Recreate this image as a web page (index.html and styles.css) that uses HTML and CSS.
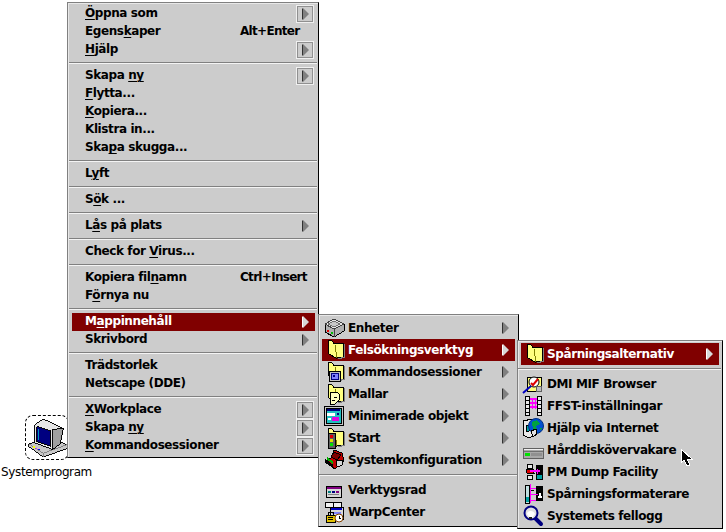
FILE: index.html
```html
<!DOCTYPE html>
<html lang="sv">
<head>
<meta charset="utf-8">
<title>Systemprogram</title>
<link rel="stylesheet" href="styles.css">
</head>
<body>
<svg class="defs" aria-hidden="true" shape-rendering="crispEdges">
  <defs>
    <symbol id="folder" viewBox="0 0 22 22">
      <path d="M5 2 L8 1 L10 3 L11 5 L20 4 L21 18 L14 19 L13 19 L6 15 Z" fill="#ffff80" stroke="#000" stroke-width="1"/>
      <path d="M12 6 L14 19" fill="none" stroke="#808000"/>
      <path d="M21 5 L22 18 L15 20" fill="none" stroke="#808080"/>
    </symbol>
  </defs>
</svg>

<main class="desktop">
  <section class="deskicon">
    <div class="deskicon-frame">
      <svg width="44" height="44" viewBox="0 0 44 44" shape-rendering="crispEdges">
        <path d="M3 28 L3 31 L18 42 L43 33 L43 29 L30 24 L18 24 Z" fill="#c8c8c8" stroke="#000"/>
        <path d="M3 28 L18 38 L43 29" fill="none" stroke="#808080"/>
        <path d="M18 38 V42" stroke="#808080"/>
        <path d="M9 8 L18 2 L39 12 L36 28 L28 34 L9 27 Z" fill="#e6e6e6" stroke="#000"/>
        <path d="M28 13 L39 12 L36 28 L28 34 Z" fill="#a0a0a0" stroke="#000"/>
        <path d="M11 10 L26 15 L26 31 L11 26 Z" fill="#000080" stroke="#000"/>
        <path d="M13 13 V24" stroke="#00a0c0"/>
        <rect x="7" y="30" width="2" height="2" fill="#ff0"/>
        <rect x="10" y="32" width="2" height="2" fill="#f0f"/>
        <rect x="13" y="34" width="2" height="1" fill="#00f"/>
      </svg>
    </div>
    <span class="deskicon-label">Systemprogram</span>
  </section>

  <nav class="menu menu-main">
    <ul class="group">
      <li class="row"><span class="label"><u>Ö</u>ppna som</span><span class="btn"><i class="tri"></i></span></li>
      <li class="row"><span class="label">Egens<u>k</u>aper</span><span class="accel">Alt+Enter</span></li>
      <li class="row"><span class="label"><u>H</u>jälp</span><span class="btn"><i class="tri"></i></span></li>
    </ul>
    <hr>
    <ul class="group">
      <li class="row"><span class="label">Skapa <u>ny</u></span><span class="btn"><i class="tri"></i></span></li>
      <li class="row"><span class="label"><u>F</u>lytta...</span></li>
      <li class="row"><span class="label"><u>K</u>opiera...</span></li>
      <li class="row"><span class="label">Klistra in...</span></li>
      <li class="row"><span class="label">Ska<u>p</u>a skugga...</span></li>
    </ul>
    <hr>
    <ul class="group"><li class="row"><span class="label">L<u>y</u>ft</span></li></ul>
    <hr>
    <ul class="group"><li class="row"><span class="label">S<u>ö</u>k ...</span></li></ul>
    <hr>
    <ul class="group"><li class="row"><span class="label">L<u>å</u>s på plats</span><span class="arrow"><i class="tri"></i></span></li></ul>
    <hr>
    <ul class="group"><li class="row"><span class="label">Check for <u>V</u>irus...</span></li></ul>
    <hr>
    <ul class="group">
      <li class="row"><span class="label">Kopiera fil<u>n</u>amn</span><span class="accel">Ctrl+Insert</span></li>
      <li class="row"><span class="label">F<u>ö</u>rnya nu</span></li>
    </ul>
    <hr>
    <ul class="group">
      <li class="row sel"><span class="label">M<u>a</u>ppinnehåll</span><span class="arrow"><i class="tri"></i></span></li>
      <li class="row"><span class="label">Skrivbord</span><span class="arrow"><i class="tri"></i></span></li>
    </ul>
    <hr>
    <ul class="group">
      <li class="row"><span class="label">Trädstorlek</span></li>
      <li class="row"><span class="label">Netscape (DDE)</span></li>
    </ul>
    <hr>
    <ul class="group">
      <li class="row"><span class="label"><u>X</u>Workplace</span><span class="btn"><i class="tri"></i></span></li>
      <li class="row"><span class="label">Skapa <u>ny</u></span><span class="btn"><i class="tri"></i></span></li>
      <li class="row"><span class="label"><u>K</u>ommandosessioner</span><span class="btn"><i class="tri"></i></span></li>
    </ul>
  </nav>

  <nav class="menu menu-sub menu-folders">
    <ul class="group">
      <li class="row"><svg class="ico" viewBox="0 0 22 22" shape-rendering="crispEdges"><path d="M2 7 L11 2 L21 7 L21 14 L11 20 L2 15 Z" fill="#b0b0b0" stroke="#000"/><path d="M2 7 L11 12 L21 7 L11 2 Z" fill="#e8e8e8" stroke="#404040"/><path d="M11 12 V20" stroke="#404040"/><path d="M5 7 L11 4 L17 7 L11 10 Z" fill="#c8c8c8" stroke="#707070"/><rect x="4" y="13" width="2" height="2" fill="#e00000"/><rect x="8" y="15" width="2" height="2" fill="#00c000"/></svg><span class="label">Enheter</span><span class="arrow"><i class="tri"></i></span></li>
      <li class="row sel"><svg class="ico" viewBox="0 0 22 22" shape-rendering="crispEdges"><use href="#folder" width="22" height="22"/></svg><span class="label">Felsökningsverktyg</span><span class="arrow"><i class="tri"></i></span></li>
      <li class="row"><svg class="ico" viewBox="0 0 22 22" shape-rendering="crispEdges"><use href="#folder" width="22" height="22"/><rect x="6" y="10" width="11" height="10" fill="#c0c0c0" stroke="#000"/><rect x="8" y="12" width="7" height="6" fill="#8080ff" stroke="#000080"/><rect x="10" y="14" width="2" height="2" fill="#000080"/></svg><span class="label">Kommandosessioner</span><span class="arrow"><i class="tri"></i></span></li>
      <li class="row"><svg class="ico" viewBox="0 0 22 22" shape-rendering="crispEdges"><use href="#folder" width="22" height="22"/><path d="M7 9 H14 L16 11 V17 L12 21 H7 Z" fill="#ffffc0" stroke="#000"/><path d="M11 14 H14 M9 17 H12" stroke="#000"/></svg><span class="label">Mallar</span><span class="arrow"><i class="tri"></i></span></li>
      <li class="row"><svg class="ico" viewBox="0 0 22 22" shape-rendering="crispEdges"><rect x="1" y="1" width="19" height="19" fill="#c8c8c8" stroke="#000"/><rect x="3" y="3" width="15" height="15" fill="#20c0c0" stroke="#000"/><rect x="4" y="4" width="13" height="2" fill="#000080"/><rect x="4" y="8" width="8" height="3" fill="#fff"/><rect x="9" y="12" width="7" height="4" fill="#e000e0"/><rect x="5" y="13" width="3" height="2" fill="#fff"/><rect x="14" y="8" width="2" height="2" fill="#000080"/></svg><span class="label">Minimerade objekt</span><span class="arrow"><i class="tri"></i></span></li>
      <li class="row"><svg class="ico" viewBox="0 0 22 22" shape-rendering="crispEdges"><use href="#folder" width="22" height="22"/><rect x="5" y="6" width="7" height="15" fill="#606060" stroke="#000"/><rect x="7" y="8" width="3" height="3" fill="#e00000"/><rect x="7" y="12" width="3" height="3" fill="#e0e000"/><rect x="7" y="16" width="3" height="3" fill="#00e000"/></svg><span class="label">Start</span><span class="arrow"><i class="tri"></i></span></li>
      <li class="row"><svg class="ico" viewBox="0 0 22 22" shape-rendering="crispEdges"><path d="M2 13 L12 20 L21 12 L19 4 L11 1 L8 9 Z" fill="#c00000" stroke="#000"/><path d="M8 8 L11 3 L18 6 L14 11 Z" fill="#800000" stroke="#000"/><path d="M13 11 H19 V16 L15 18 L13 16 Z" fill="#d8d8d8" stroke="#000"/><path d="M2 11 L10 17" stroke="#000" stroke-width="2"/><path d="M4 9 L10 14" stroke="#00b000" stroke-width="2"/></svg><span class="label">Systemkonfiguration</span><span class="arrow"><i class="tri"></i></span></li>
    </ul>
    <hr>
    <ul class="group">
      <li class="row"><svg class="ico" viewBox="0 0 22 22" shape-rendering="crispEdges"><rect x="3" y="7" width="15" height="11" fill="#d8d8d8" stroke="#000"/><rect x="4" y="8" width="14" height="2" fill="#800080"/><rect x="5" y="12" width="3" height="2" fill="#008080"/><rect x="9" y="12" width="3" height="2" fill="#000080"/><rect x="13" y="12" width="3" height="2" fill="#800080"/><rect x="5" y="15" width="11" height="1" fill="#808080"/></svg><span class="label">Verktygsrad</span></li>
      <li class="row"><svg class="ico" viewBox="0 0 22 22" shape-rendering="crispEdges"><rect x="2" y="1" width="8" height="5" fill="#f0f0f0" stroke="#000"/><rect x="10" y="1" width="8" height="5" fill="#f0f0f0" stroke="#000"/><rect x="7" y="6" width="13" height="12" fill="#d8d8d8" stroke="#000"/><rect x="8" y="7" width="11" height="2" fill="#0000c0"/><rect x="9" y="11" width="9" height="2" fill="#8080ff"/><rect x="3" y="14" width="9" height="7" fill="#e0c000" stroke="#000"/><path d="M5 14 V11 H10 V14" fill="none" stroke="#000"/><path d="M5 16 H10 M5 18 H10" stroke="#000"/><circle cx="16" cy="17" r="4" fill="#fff" stroke="#804000" shape-rendering="auto"/><path d="M16 14.5 V17 H18" fill="none" stroke="#000"/></svg><span class="label">WarpCenter</span></li>
    </ul>
  </nav>

  <nav class="menu menu-sub menu-tools">
    <ul class="group">
      <li class="row sel"><svg class="ico" viewBox="0 0 22 22" shape-rendering="crispEdges"><use href="#folder" width="22" height="22"/></svg><span class="label">Spårningsalternativ</span><span class="arrow"><i class="tri"></i></span></li>
    </ul>
    <hr>
    <ul class="group">
      <li class="row"><svg class="ico" viewBox="0 0 22 22" shape-rendering="crispEdges"><rect x="5" y="4" width="14" height="14" fill="#ffff80" stroke="#000"/><circle cx="12" cy="9" r="5" fill="#fff" stroke="#000" shape-rendering="auto"/><path d="M9 10 L11 12 L16 6" fill="none" stroke="#e00000" stroke-width="2" shape-rendering="auto"/><path d="M1 20 L9 13" stroke="#0000c0" stroke-width="2" shape-rendering="auto"/><rect x="14" y="13" width="5" height="5" fill="#c0c0c0" stroke="#606060"/></svg><span class="label">DMI MIF Browser</span></li>
      <li class="row"><svg class="ico" viewBox="0 0 22 22" shape-rendering="crispEdges"><rect x="3" y="1" width="4" height="19" fill="#e8e8e8" stroke="#000"/><rect x="15" y="1" width="4" height="19" fill="#e8e8e8" stroke="#000"/><path d="M3 5 H7 M3 9 H7 M3 13 H7 M3 17 H7 M15 5 H19 M15 9 H19 M15 13 H19 M15 17 H19" stroke="#000"/><path d="M8 4 H15 M8 8 H15 M8 12 H15" stroke="#ff00ff" stroke-width="2"/><path d="M10 3 V14 M13 3 V14" stroke="#ff00ff"/></svg><span class="label">FFST-inställningar</span></li>
      <li class="row"><svg class="ico" viewBox="0 0 22 22" shape-rendering="crispEdges"><path d="M1 4 L10 2 L11 19 L7 21 L1 18 Z" fill="#e8e8e8" stroke="#000"/><path d="M4 9 L7 8 V14 L4 15 Z" fill="#00a0a0" stroke="#000"/><circle cx="14" cy="9" r="7.5" fill="#0050d0" stroke="#003080" shape-rendering="auto"/><path d="M10 5 L15 3 L18 7 L14 9 L15 13 L11 12 Z M18 11 L20 11 L18 14 Z" fill="#00a040"/><path d="M9 14 L14 12 L15 17 L11 20 Z" fill="#e0e0e0" stroke="#000"/></svg><span class="label">Hjälp via Internet</span></li>
      <li class="row"><svg class="ico" viewBox="0 0 22 22" shape-rendering="crispEdges"><rect x="1" y="9" width="20" height="10" fill="#a8a8a8" stroke="#606060"/><path d="M2 10 H21" stroke="#f0f0f0"/><path d="M2 12 H21" stroke="#707070"/><rect x="3" y="14" width="5" height="3" fill="#00e000"/><rect x="9" y="14" width="11" height="3" fill="#909090"/></svg><span class="label">Hårddiskövervakare</span></li>
      <li class="row"><svg class="ico" viewBox="0 0 22 22" shape-rendering="crispEdges"><rect x="14" y="4" width="7" height="15" fill="#000" /><rect x="15" y="14" width="5" height="4" fill="#00a0a0"/><rect x="5" y="3" width="5" height="4" fill="#e8e8e8" stroke="#000"/><rect x="5" y="14" width="5" height="4" fill="#e8e8e8" stroke="#000"/><path d="M4 8 H11 L12 12 H5 Z" fill="#e00000" stroke="#000"/><path d="M8 10 H18" stroke="#ff00ff" stroke-width="2"/><path d="M15 8 V13" stroke="#ff00ff"/></svg><span class="label">PM Dump Facility</span></li>
      <li class="row"><svg class="ico" viewBox="0 0 22 22" shape-rendering="crispEdges"><rect x="14" y="3" width="7" height="15" fill="#000"/><path d="M16 15 L18 8 L20 15 Z" fill="#fff"/><rect x="3" y="2" width="4" height="18" fill="#c0e0e0" stroke="#000"/><rect x="4" y="14" width="3" height="5" fill="#00a0a0"/><path d="M8 1 V20 M8 5 H14 M8 11 H16 M8 17 H14" stroke="#ff00ff"/><path d="M9 7 H12" stroke="#000"/></svg><span class="label">Spårningsformaterare</span></li>
      <li class="row"><svg class="ico" viewBox="0 0 22 22"><path d="M13 13 L19 19" stroke="#000080" stroke-width="4" stroke-linecap="round"/><circle cx="9" cy="8" r="6.5" fill="#e0e0e0" stroke="#000080" stroke-width="2"/><path d="M5 9 C5 5 12 5 13 9 L10 13 L8 13 Z" fill="#fff"/><rect x="7" y="12" width="3" height="2" fill="#202020"/></svg><span class="label">Systemets fellogg</span></li>
    </ul>
  </nav>

  <svg class="cursor" width="14" height="20" viewBox="0 0 14 20" shape-rendering="crispEdges">
    <path d="M1 1 L1 15 L4 12 L7 18 L10 17 L7 11 L12 11 Z" fill="#000" stroke="#fff" stroke-width="1"/>
  </svg>
</main>
</body>
</html>
```
FILE: styles.css
```css
* { box-sizing: border-box; }
html, body { margin: 0; padding: 0; background: #fff; }
.defs { position: absolute; width: 0; height: 0; }
.desktop {
  position: relative;
  width: 726px;
  height: 532px;
  overflow: hidden;
  background: #fff;
  font-family: "DejaVu Sans", sans-serif;
  color: #000;
}
.menu {
  position: absolute;
  background: #cccccc;
  border-style: solid;
  border-width: 1px;
  border-color: #808080 #000 #000 #808080;
  box-shadow: inset 1px 1px 0 #e8e8e8;
  font-size: 12px;
  font-weight: 700;
  letter-spacing: -0.4px;
}
.menu-main { left: 67px; top: 2px; width: 252px; height: 456px; padding: 2px 3px 2px 4px; z-index: 1; }
.menu-folders { left: 318px; top: 314px; width: 201px; height: 213px; padding: 2px 3px 3px 3px; z-index: 2; }
.menu-tools { left: 517px; top: 340px; width: 206px; height: 189px; padding: 2px 3px 1px 3px; z-index: 3; }
.group { list-style: none; margin: 0; padding: 0; }
hr {
  margin: 3px -2px 3px -3px;
  height: 2px;
  border: 0;
  border-top: 1px solid #808080;
  border-bottom: 1px solid #f4f4f4;
}
.row { display: flex; align-items: center; height: 18px; padding: 0 0 0 13px; white-space: nowrap; }
.menu-sub .row { height: 22px; padding-left: 1px; gap: 3px; }
.menu-main .label, .menu-main .accel { padding-bottom: 2px; }
.sel { background: #800000; color: #fff; }
.label { flex: 1; }
u { text-decoration: underline; text-decoration-thickness: 1px; text-underline-offset: 2px; }
.accel { flex: none; width: 75px; letter-spacing: -0.7px; }
.ico { width: 22px; height: 22px; flex: none; }
.tri {
  display: block;
  width: 0;
  height: 0;
  border-style: solid;
  border-width: 6px 0 6px 6px;
  border-color: transparent transparent transparent #808080;
  filter: drop-shadow(-1px 0 0 #303030);
}
.sel .tri { border-left-color: #d8d8d8; filter: drop-shadow(-1px 0 0 #fff); }
.btn, .arrow { display: flex; align-items: center; justify-content: center; flex: none; width: 18px; height: 18px; }
.btn {
  margin-right: 1px;
  padding-left: 2px;
  border: 1px solid #f0f0f0;
  box-shadow: inset 0 0 0 1px #909090;
}
.menu-sub .arrow { margin-right: 3px; width: 12px; }
.deskicon {
  position: absolute;
  left: 0;
  top: 415px;
  width: 93px;
  display: flex;
  flex-direction: column;
  align-items: center;
}
.deskicon-frame {
  width: 44px;
  height: 45px;
  border: 1px dashed #000;
  border-radius: 8px;
  display: flex;
  align-items: center;
  justify-content: center;
}
.deskicon-label { font-size: 12px; margin-top: 5px; letter-spacing: -0.4px; }
.cursor { position: absolute; left: 680px; top: 448px; z-index: 4; }
```
